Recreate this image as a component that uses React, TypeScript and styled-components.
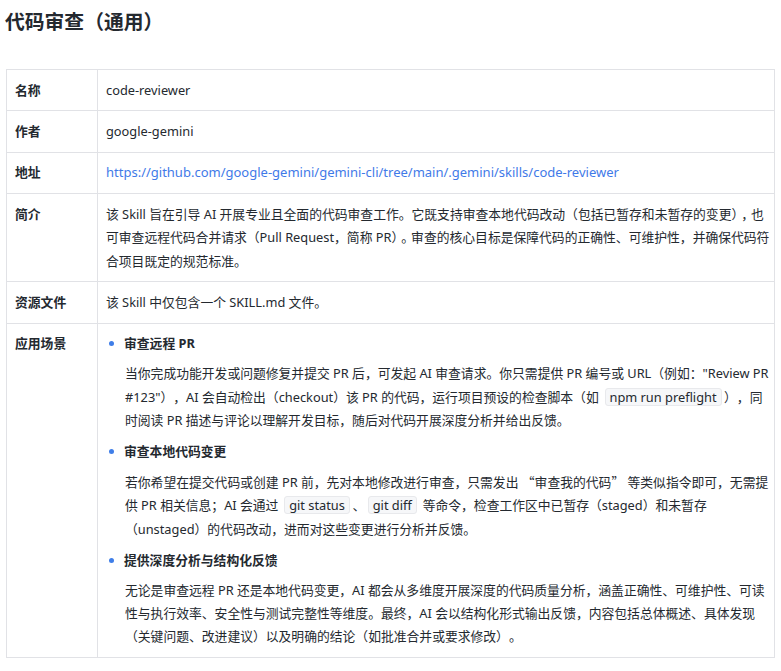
import React from 'react';
import styled, { createGlobalStyle } from 'styled-components';

const GlobalStyle = createGlobalStyle`
  html, body {
    margin: 0;
    padding: 0;
    background: #fff;
  }
  body {
    font-family: 'Noto Sans', 'Noto Sans CJK SC', sans-serif;
    font-size: 12.8px;
    line-height: 23.4px;
    color: #24292f;
    text-spacing-trim: space-all;
  }
`;

const Page = styled.div`
  padding: 0 6px 0 5px;
`;

const Title = styled.h1`
  margin: 0 0 29px;
  padding-top: 4px;
  font-size: 19.8px;
  line-height: 36px;
  font-weight: 700;
  color: #24292f;
`;

const Table = styled.table`
  width: 769px;
  margin-left: 1px;
  border-collapse: collapse;
  table-layout: fixed;
`;

const Label = styled.th`
  width: 74px;
  padding: 8.5px 8px;
  border: 1px solid #e1e2e6;
  text-align: left;
  vertical-align: top;
  font-weight: 700;
`;

const Cell = styled.td`
  padding: 8.5px 8px;
  border: 1px solid #e1e2e6;
  vertical-align: top;
  white-space: nowrap;
`;

const Link = styled.a`
  color: #3f7ae8;
  font-size: 13px;
  text-decoration: none;
`;

const Scenes = styled.ul`
  margin: 0;
  padding: 0 0 0 18px;
  list-style: none;
`;

const Scene = styled.li`
  position: relative;
  margin-bottom: 7.5px;

  &:last-child {
    margin-bottom: 0;
  }

  &::before {
    content: '';
    position: absolute;
    left: -15px;
    top: 9px;
    width: 5px;
    height: 5px;
    border-radius: 50%;
    background: #3f7ee8;
  }
`;

const SceneTitle = styled.strong`
  display: block;
  font-weight: 700;
`;

const SceneText = styled.p`
  margin: 6.5px 0 0 1px;
`;

const Code = styled.code`
  display: inline-block;
  margin: 0 2.5px;
  padding: 0 4px;
  border: 1px solid #e8e9ec;
  border-radius: 3px;
  background: #f6f7f9;
  font-family: 'Noto Sans', sans-serif;
  font-size: 12.8px;
  line-height: 16px;
`;

const Quoted = styled.span`
  font-family: 'Noto Sans CJK SC', sans-serif;
`;

const TightPunct = styled.span`
  letter-spacing: -3px;
`;

const rows: { label: string; value: React.ReactNode }[] = [
  { label: '名称', value: 'code-reviewer' },
  { label: '作者', value: 'google-gemini' },
  {
    label: '地址',
    value: (
      <Link href="#">
        https://github.com/google-gemini/gemini-cli/tree/main/.gemini/skills/code-reviewer
      </Link>
    ),
  },
  {
    label: '简介',
    value: (
      <>
        该 Skill 旨在引导 AI 开展专业且全面的代码审查工作。它既支持审查本地代码改动（包括已暂存和未暂存的变更<TightPunct>），</TightPunct>也
        <br />
        可审查远程代码合并请求（Pull Request，简称 PR<TightPunct>）。</TightPunct>审查的核心目标是保障代码的正确性、可维护性，并确保代码符
        <br />
        合项目既定的规范标准。
      </>
    ),
  },
  { label: '资源文件', value: '该 Skill 中仅包含一个 SKILL.md 文件。' },
];

const App: React.FC = () => {
  return (
    <Page>
      <GlobalStyle />
      <Title>代码审查（通用）</Title>
      <Table>
        <tbody>
          {rows.map((row) => (
            <tr key={row.label}>
              <Label>{row.label}</Label>
              <Cell>{row.value}</Cell>
            </tr>
          ))}
          <tr>
            <Label>应用场景</Label>
            <Cell>
              <Scenes>
                <Scene>
                  <SceneTitle>审查远程 PR</SceneTitle>
                  <SceneText>
                    当你完成功能开发或问题修复并提交 PR 后，可发起 AI 审查请求。你只需提供 PR 编号或 URL（例如："Review PR
                    <br />
                    #123"），AI 会自动检出（checkout）该 PR 的代码，运行项目预设的检查脚本（如 <Code>npm run preflight</Code>），同
                    <br />
                    时阅读 PR 描述与评论以理解开发目标，随后对代码开展深度分析并给出反馈。
                  </SceneText>
                </Scene>
                <Scene>
                  <SceneTitle>审查本地代码变更</SceneTitle>
                  <SceneText>
                    若你希望在提交代码或创建 PR 前，先对本地修改进行审查，只需发出 <Quoted>“审查我的代码”</Quoted> 等类似指令即可，无需提
                    <br />
                    供 PR 相关信息；AI 会通过 <Code>git status</Code>、<Code>git diff</Code> 等命令，检查工作区中已暂存（staged）和未暂存
                    <br />
                    （unstaged）的代码改动，进而对这些变更进行分析并反馈。
                  </SceneText>
                </Scene>
                <Scene>
                  <SceneTitle>提供深度分析与结构化反馈</SceneTitle>
                  <SceneText>
                    无论是审查远程 PR 还是本地代码变更，AI 都会从多维度开展深度的代码质量分析，涵盖正确性、可维护性、可读
                    <br />
                    性与执行效率、安全性与测试完整性等维度。最终，AI 会以结构化形式输出反馈，内容包括总体概述、具体发现
                    <br />
                    （关键问题、改进建议）以及明确的结论（如批准合并或要求修改）。
                  </SceneText>
                </Scene>
              </Scenes>
            </Cell>
          </tr>
        </tbody>
      </Table>
    </Page>
  );
};

export default App;
